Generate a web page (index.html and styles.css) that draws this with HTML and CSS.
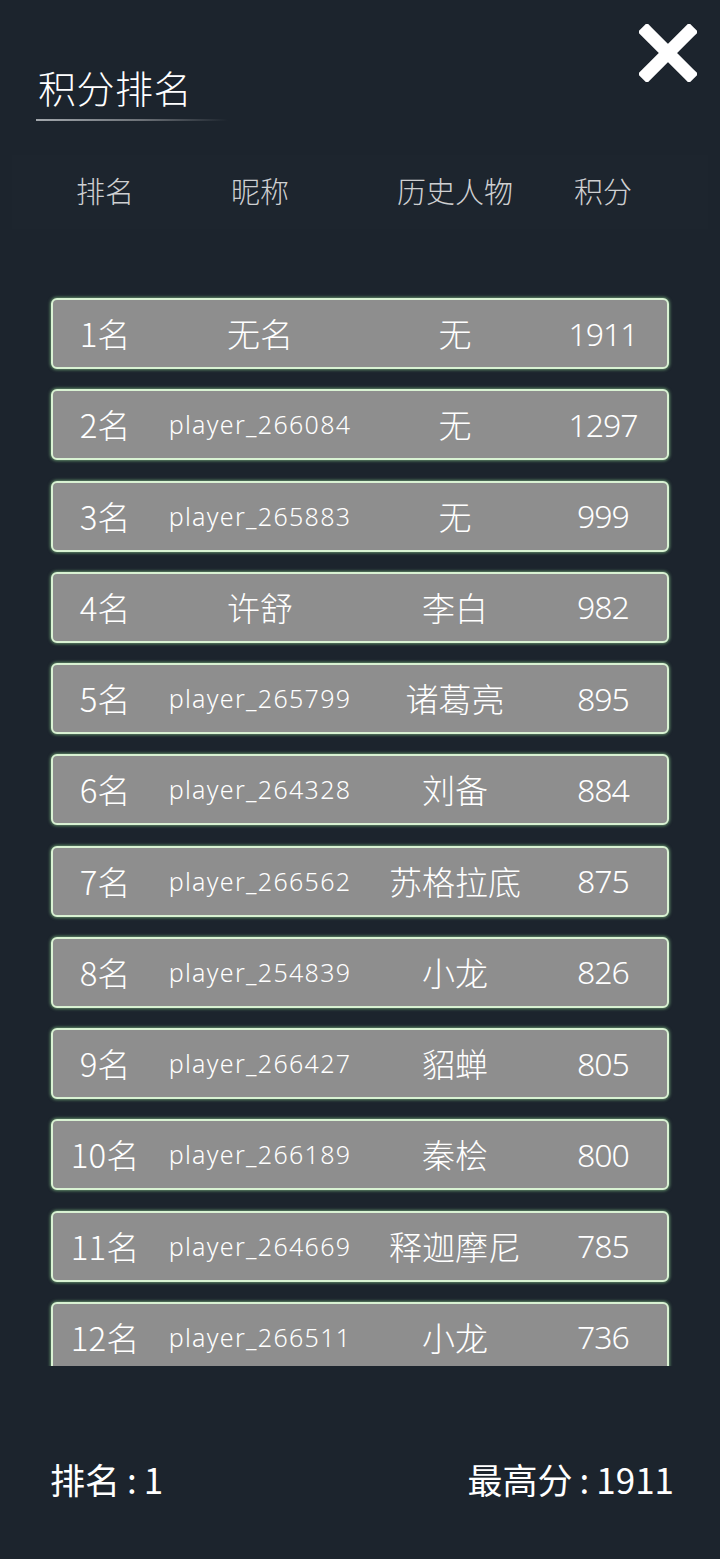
FILE: index.html
```html
<!DOCTYPE html>
<html lang="zh">
<head>
<meta charset="utf-8">
<title>积分排名</title>
<link rel="stylesheet" href="styles.css">
</head>
<body>
<div class="page">
  <button class="close" aria-label="关闭">
    <svg width="58" height="58" viewBox="0 0 58 58"><path d="M8 8 L50 50 M50 8 L8 50" stroke="#ffffff" stroke-width="13" stroke-linecap="square" fill="none"/></svg>
  </button>
  <div class="title-wrap">
    <h1 class="title">积分排名</h1>
    <div class="underline"></div>
  </div>
  <div class="header">
    <div class="cols">
      <span>排名</span><span>昵称</span><span>历史人物</span><span>积分</span>
    </div>
  </div>
  <div class="list">
    <div class="row"><span>1名</span><span class="nick-cn">无名</span><span>无</span><span class="num">1911</span></div>
    <div class="row"><span>2名</span><span class="nick">player_266084</span><span>无</span><span class="num">1297</span></div>
    <div class="row"><span>3名</span><span class="nick">player_265883</span><span>无</span><span class="num">999</span></div>
    <div class="row"><span>4名</span><span class="nick-cn">许舒</span><span>李白</span><span class="num">982</span></div>
    <div class="row"><span>5名</span><span class="nick">player_265799</span><span>诸葛亮</span><span class="num">895</span></div>
    <div class="row"><span>6名</span><span class="nick">player_264328</span><span>刘备</span><span class="num">884</span></div>
    <div class="row"><span>7名</span><span class="nick">player_266562</span><span>苏格拉底</span><span class="num">875</span></div>
    <div class="row"><span>8名</span><span class="nick">player_254839</span><span>小龙</span><span class="num">826</span></div>
    <div class="row"><span>9名</span><span class="nick">player_266427</span><span>貂蝉</span><span class="num">805</span></div>
    <div class="row"><span>10名</span><span class="nick">player_266189</span><span>秦桧</span><span class="num">800</span></div>
    <div class="row"><span>11名</span><span class="nick">player_264669</span><span>释迦摩尼</span><span class="num">785</span></div>
    <div class="row"><span>12名</span><span class="nick">player_266511</span><span>小龙</span><span class="num">736</span></div>
  </div>
  <div class="footer">
    <span>排名<span class="colon">:</span>1</span>
    <span>最高分<span class="colon">:</span>1911</span>
  </div>
</div>
</body>
</html>
```

FILE: styles.css
```css
html, body {
  margin: 0;
  padding: 0;
  background: #1c242d;
}
body {
  font-family: "Noto Sans CJK SC", "Noto Sans", sans-serif;
  font-weight: 300;
  color: #ffffff;
}
.page {
  position: relative;
  width: 720px;
  height: 1559px;
  overflow: hidden;
}
.close {
  position: absolute;
  top: 24px;
  right: 23px;
  width: 58px;
  height: 58px;
  padding: 0;
  border: 0;
  background: none;
}
.close svg { display: block; }
.title-wrap {
  padding: 64px 0 0 36px;
}
.title {
  margin: 0;
  padding-left: 2px;
  font-size: 38px;
  font-weight: 300;
  line-height: 46px;
  letter-spacing: 0.5px;
  color: #ffffff;
}
.underline {
  margin-top: 9px;
  width: 192px;
  height: 2px;
  background: linear-gradient(to right, #a3a8ad 0%, #6c7177 55%, rgba(40,48,56,0) 100%);
}
.header {
  margin: 34px 12px 0 12px;
  height: 74px;
  display: flex;
  align-items: center;
  background: rgba(255,255,255,0.008);
}
.cols, .row {
  display: grid;
  grid-template-columns: 104px 206px 184px 112px;
  align-items: center;
  justify-items: center;
}
.cols {
  padding-left: 41px;
  padding-bottom: 4px;
  font-size: 29px;
  color: #cfd0d2;
}
.list {
  margin-top: 61px;
  height: 1068px;
  padding: 8px 0 0 51px;
  overflow: hidden;
  display: flex;
  flex-direction: column;
  gap: 20.27px;
}
.row {
  box-sizing: border-box;
  flex: none;
  width: 618px;
  height: 71px;
  border: 2px solid #d9f2d3;
  border-radius: 6px;
  background: #8e8e8e;
  box-shadow: 0 0 3px 1px rgba(150, 220, 150, 0.55);
  font-size: 33px;
  color: #ffffff;
  line-height: 1;
}
.row .nick {
  font-family: "Noto Sans", sans-serif;
  font-weight: 300;
  font-size: 25px;
  letter-spacing: 1.3px;
}
.row .num {
  font-family: "Noto Sans", sans-serif;
  font-weight: 300;
  font-size: 32px;
  letter-spacing: -1px;
}
.footer {
  margin-top: 87px;
  padding: 0 46px 0 50px;
  display: flex;
  justify-content: space-between;
  align-items: center;
  height: 50px;
  font-size: 35px;
  font-weight: 400;
  color: #ffffff;
}
.colon {
  padding: 0 7px 0 7px;
}
```
